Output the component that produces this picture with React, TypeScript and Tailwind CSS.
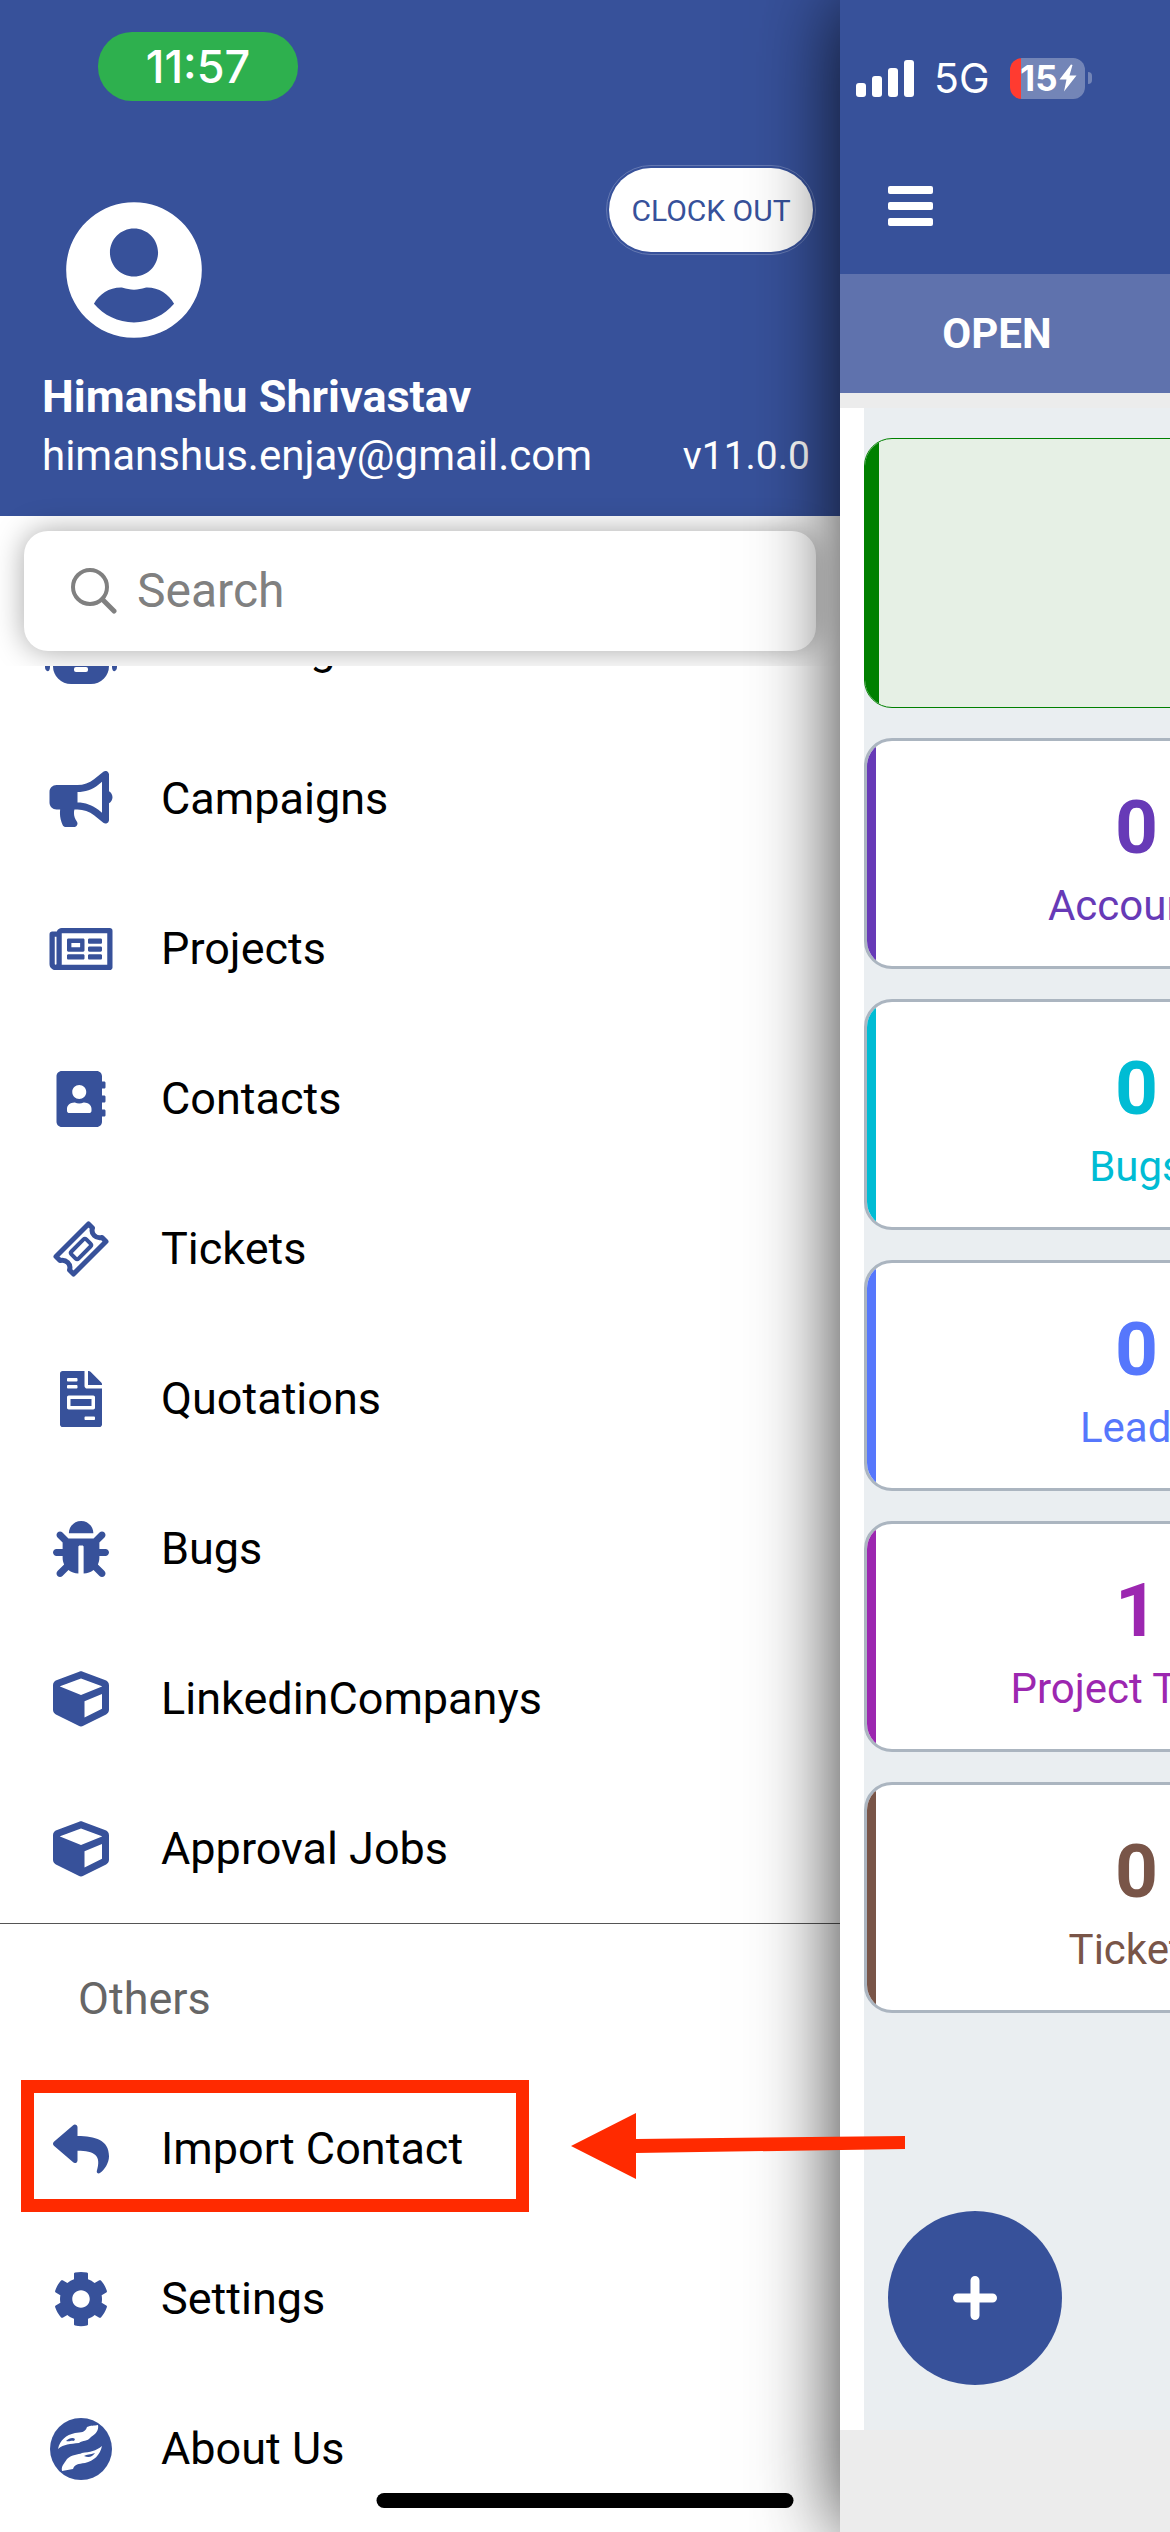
import type { ComponentType, ReactNode } from "react";
import {
  FaAddressBook,
  FaBug,
  FaBullhorn,
  FaCog,
  FaCube,
  FaFileInvoice,
  FaRegNewspaper,
  FaReply,
  FaUserCircle,
} from "react-icons/fa";

type IconProps = { className?: string };
type MenuItem = { label: string; icon: ComponentType<IconProps>; iconSize?: string };

function RobotIcon({ className }: IconProps) {
  return (
    <svg viewBox="0 0 72 72" className={className} fill="currentColor" aria-hidden="true">
      <path d="M33 2 H39 V14 H33 Z" />
      <rect x="8" y="14" width="56" height="57" rx="18" />
      <path d="M0 36 C0 32 5 32 5 36 V54 C5 60 0 59 0 54 Z M67 36 C67 32 72 32 72 36 V54 C72 59 67 60 67 54 Z" />
      <circle cx="24" cy="36" r="5" fill="#fff" />
      <circle cx="48" cy="36" r="5" fill="#fff" />
      <rect x="29" y="54" width="14" height="5" rx="2" fill="#fff" />
    </svg>
  );
}

function TicketIcon({ className }: IconProps) {
  return (
    <svg viewBox="0 0 56 56" className={className} fill="none" stroke="currentColor" strokeWidth="5" strokeLinejoin="round" aria-hidden="true">
      <path d="M35.500 3 L39.500 7 C37.500 13 43 18 49 16.500 L53 20.500 L20.500 53 L16.500 49 C18.500 43 13 38 7 39.500 L3 35.500 Z" />
      <rect x="17.500" y="23" width="21" height="10" rx="2" strokeWidth="4" transform="rotate(-45 28 28)" />
    </svg>
  );
}

function HandsIcon({ className }: IconProps) {
  return (
    <svg viewBox="0 0 62 62" className={className} aria-hidden="true">
      <circle cx="31" cy="31" r="31" fill="currentColor" />
      <path d="M8 31 C10 22 16 17 25 15 C31 14 35 15 37 9 C41 7 44 8 48 7 C49 12 46 16 41 19 C37 24 33 22 29 25 C20 26 14 26 8 31 Z" fill="#fff" />
      <path d="M16 23 C19 20 23 19 25 21 L24 23 C21 22 20 24 16 23 Z" fill="currentColor" />
      <path d="M52 28 C50 37 44 43 35 45 C28 46 25 46 23 51 C19 52 16 52 12 53 C11 48 14 46 17 41 C22 36 28 37 32 35 C40 34 46 33 52 28 Z" fill="#fff" />
      <path d="M34 38 C37 36 40 37 45 35 C42 39 39 40 34 38 Z" fill="currentColor" />
    </svg>
  );
}

function SearchIcon({ className }: IconProps) {
  return (
    <svg viewBox="0 0 46 46" className={className} fill="none" stroke="currentColor" aria-hidden="true">
      <circle cx="19" cy="19" r="17" strokeWidth="4" />
      <path d="M31.500 31.500 L43 43" strokeWidth="5" strokeLinecap="round" />
    </svg>
  );
}

const modules: MenuItem[] = [
  { label: "Planning", icon: RobotIcon, iconSize: "size-[72px]" },
  { label: "Campaigns", icon: FaBullhorn },
  { label: "Projects", icon: FaRegNewspaper },
  { label: "Contacts", icon: FaAddressBook },
  { label: "Tickets", icon: TicketIcon },
  { label: "Quotations", icon: FaFileInvoice },
  { label: "Bugs", icon: FaBug },
  { label: "LinkedinCompanys", icon: FaCube },
  { label: "Approval Jobs", icon: FaCube },
];

const counters = [
  { label: "Accounts", count: 0, text: "text-[#673ab7]", bar: "bg-[#673ab7]" },
  { label: "Bugs", count: 0, text: "text-[#00bcd4]", bar: "bg-[#00bcd4]" },
  { label: "Leads", count: 0, text: "text-[#5677fc]", bar: "bg-[#5677fc]" },
  { label: "Project Tasks", count: 1, text: "text-[#9c27b0]", bar: "bg-[#9c27b0]" },
  { label: "Tickets", count: 0, text: "text-[#795548]", bar: "bg-[#795548]" },
];

function MenuRow({ item, children }: { item: MenuItem; children?: ReactNode }) {
  const Icon = item.icon;
  return (
    <li className="relative h-[150px]">
      <a href="#" className="flex h-full items-center gap-11 pl-[45px] text-[45px] leading-[54px] text-black">
        <span className="flex w-[72px] shrink-0 justify-center text-[#37519a]">
          <Icon className={item.iconSize ?? "h-14 w-[72px]"} />
        </span>
        {item.label}
      </a>
      {children}
    </li>
  );
}

function Drawer() {
  return (
    <aside className="flex min-w-0 flex-col bg-white">
      <header className="flex h-[516px] flex-col bg-[#37519a] text-white">
        <div className="ml-[98px] mt-8 flex h-[69px] w-[200px] items-center justify-center rounded-[34px] bg-[#2eb04e] font-[Inter] text-[45px] font-medium">
          11:57
        </div>
        <div className="mt-16 flex items-start justify-between pl-[66px] pr-6">
          <FaUserCircle className="mt-[35px] h-[140px] w-[136px]" aria-label="Profile picture" />
          <button className="h-[90px] w-[210px] rounded-full border border-[#6478b1] bg-white bg-clip-content p-[2px] text-[30px] text-[#37519a]">
            CLOCK OUT
          </button>
        </div>
        <div className="mt-[30px] flex flex-col px-[42px]">
          <h1 className="text-[45px] font-bold leading-[54px]">Himanshu Shrivastav</h1>
          <div className="mt-[5px] flex items-center justify-between">
            <p className="text-[42px] leading-[54px]">himanshus.enjay@gmail.com</p>
            <span className="-mr-3 text-[39px] leading-[54px]">v11.0.0</span>
          </div>
        </div>
      </header>
      <div className="px-6 py-[15px]">
        <label className="flex h-[120px] items-center gap-5 rounded-3xl bg-white pl-[47px] text-[#808080] shadow-[0_0_30px_rgba(0,0,0,0.35)]">
          <SearchIcon className="size-[46px] shrink-0" />
          <input
            type="search"
            aria-label="Search"
            placeholder="Search"
            className="min-w-0 flex-1 bg-transparent text-[48px] outline-none placeholder:text-[#808080]"
          />
        </label>
      </div>
      <nav className="relative flex-1 overflow-y-clip bg-white">
        <ul className="-mt-[92px] [&>li:last-child]:border-b [&>li:last-child]:border-[#555]">
          {modules.map((item) => (
            <MenuRow key={item.label} item={item} />
          ))}
        </ul>
        <h2 className="flex h-[150px] items-center pl-[78px] text-[45px] leading-[54px] text-[#666]">Others</h2>
        <ul>
          <MenuRow item={{ label: "Import Contact", icon: FaReply }}>
            <div className="pointer-events-none absolute left-[21px] top-[6px] h-[132px] w-[508px] border-[13px] border-[#ff2a00]" />
            <svg viewBox="0 0 334 66" className="pointer-events-none absolute left-[571px] top-[39px] z-20 h-[66px] w-[334px] fill-[#ff2a00]" aria-hidden="true">
              <path d="M0 33 L65 0 V26 L334 23 V36 L65 40 V66 Z" />
            </svg>
          </MenuRow>
          <MenuRow item={{ label: "Settings", icon: FaCog }} />
          <MenuRow item={{ label: "About Us", icon: HandsIcon, iconSize: "size-[62px]" }} />
        </ul>
      </nav>
    </aside>
  );
}

function StatusIcons() {
  return (
    <div className="flex h-[42px] items-center">
      <div className="flex h-[38px] items-end gap-[6px]" role="img" aria-label="Signal strength">
        <span className="h-[14px] w-[10px] rounded-[3px] bg-white" />
        <span className="h-[21px] w-[10px] rounded-[3px] bg-white" />
        <span className="h-[29px] w-[10px] rounded-[3px] bg-white" />
        <span className="h-[37px] w-[10px] rounded-[3px] bg-white" />
      </div>
      <span className="ml-5 font-[Inter] text-[41px] leading-none">5G</span>
      <div className="ml-5 flex h-[41px] w-[75px] items-center justify-end overflow-hidden rounded-xl bg-linear-to-r from-[#ff3b30] from-[11px] to-[#7385b7] to-[11px] pr-2 font-[Inter] text-[35px] font-bold leading-none">
        15
        <svg viewBox="0 0 18 28" className="ml-px h-7 w-[18px] fill-white" aria-hidden="true">
          <path d="M12 0.500 L0.500 15.500 H7.500 L5 27.500 L17.500 11.500 H10.500 L13.500 1 Z" />
        </svg>
      </div>
      <span className="ml-[3px] h-3 w-1 rounded-r-full bg-[#7385b7]" />
    </div>
  );
}

function Dashboard() {
  return (
    <main className="relative z-10 min-w-0 overflow-x-clip shadow-[0_0_80px_rgba(0,0,0,0.8)]">
      <div className="flex h-full w-[1170px] flex-col bg-[#ececec]">
        <header className="h-[274px] bg-[#37519a] pl-4 pt-[57px] text-white">
          <StatusIcons />
          <button aria-label="Open menu" className="ml-8 mt-[87px] flex w-[45px] flex-col gap-2">
            <span className="h-2 rounded-[2px] bg-white" />
            <span className="h-2 rounded-[2px] bg-white" />
            <span className="h-2 rounded-[2px] bg-white" />
          </button>
        </header>
        <div className="flex h-[119px] bg-[#5f72ad]">
          <button className="w-[314px] text-[42px] font-bold text-white">OPEN</button>
        </div>
        <section className="relative mt-[15px] flex flex-1 flex-col border-l-24 border-white bg-[#eaeef1] pt-[30px]">
          <div className="flex h-[270px] w-[1122px] overflow-hidden rounded-[28px] border border-[#008000] bg-[#e6f0e5]">
            <span className="w-[14px] bg-[#008000]" />
          </div>
          <div className="mt-[30px] flex w-[545px] flex-col gap-[30px]">
            {counters.map((c) => (
              <article key={c.label} className="flex h-[231px] overflow-hidden rounded-[28px] border-[3px] border-[#abb5c0] bg-white">
                <span className={`w-[9px] shrink-0 ${c.bar}`} />
                <div className={`flex flex-1 flex-col items-center justify-center pr-[9px] pt-2 ${c.text}`}>
                  <strong className="text-[75px] font-bold leading-[88px]">{c.count}</strong>
                  <span className="mt-2 text-[42px] leading-[54px]">{c.label}</span>
                </div>
              </article>
            ))}
          </div>
          <button aria-label="Add" className="absolute bottom-[45px] left-6 flex size-[174px] items-center justify-center rounded-full bg-[#37519a]">
            <svg viewBox="0 0 44 44" className="size-11 stroke-white" strokeWidth="9" aria-hidden="true">
              <path d="M22 4.500 V39.500 M4.500 22 H39.500" strokeLinecap="round" />
            </svg>
          </button>
        </section>
        <div className="h-[102px]" />
      </div>
    </main>
  );
}

export default function App() {
  return (
    <div className="relative grid min-h-screen grid-cols-[minmax(0,28fr)_minmax(0,11fr)] overflow-hidden bg-white font-[Roboto,sans-serif]">
      <Drawer />
      <Dashboard />
      <div className="absolute bottom-6 left-1/2 z-20 h-[15px] w-[417px] -translate-x-1/2 rounded-full bg-black" />
    </div>
  );
}
